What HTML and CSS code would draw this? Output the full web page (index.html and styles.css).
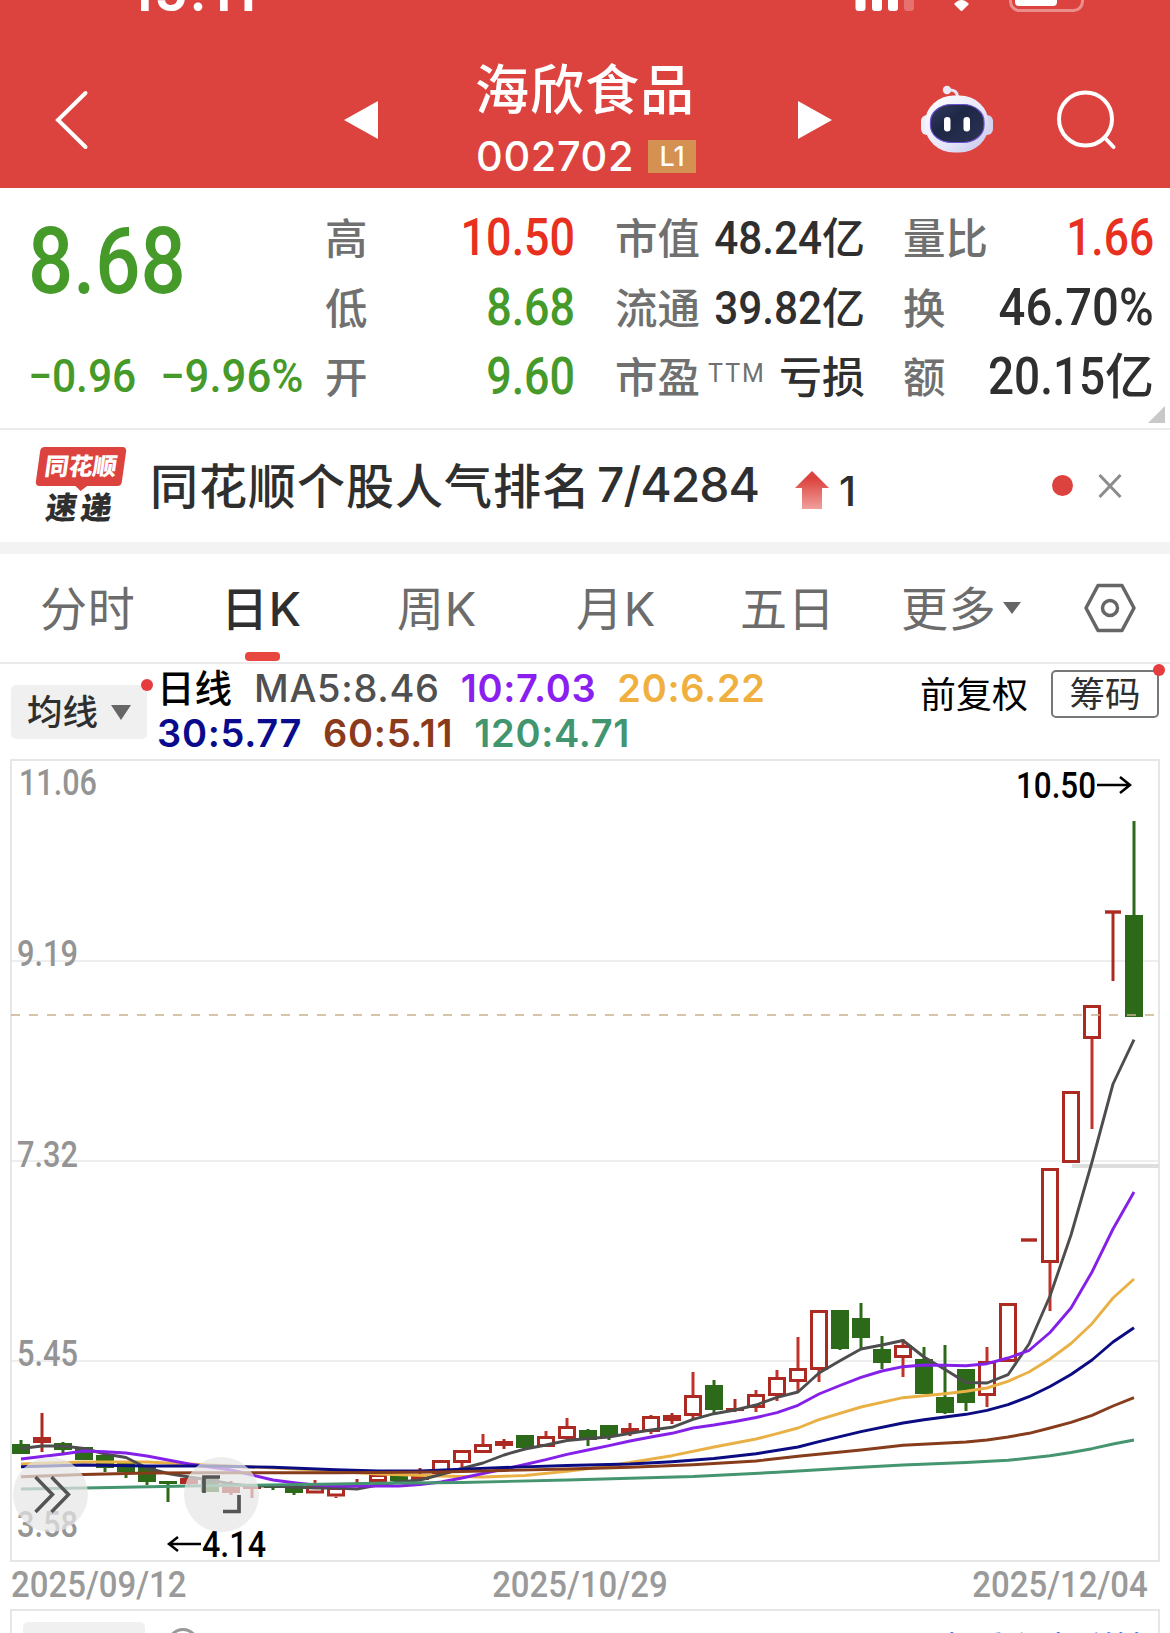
FILE: index.html
```
<!DOCTYPE html>
<html lang="zh-CN">
<head>
  <meta charset="UTF-8">
  <title>海欣食品 002702</title>
  <link rel="stylesheet" href="styles.css">
</head>
<body>
  <header class="header">
    <div class="status">
      <span class="clock">15:11</span>
      <svg class="status-icons" width="232" height="13" viewBox="853 0 232 13">
        <g fill="#fff">
          <rect x="855.5" y="-10" width="10" height="21" rx="3"/>
          <rect x="872" y="-10" width="10" height="21" rx="3"/>
          <rect x="888" y="-10" width="10" height="21" rx="3"/>
          <rect x="904" y="-10" width="10" height="21" rx="3" opacity=".25"/>
          <path d="M954 4 Q961.500 -4 969 4 L963 10 Q961.500 12 960 10 Z"/>
          <rect x="1015" y="-12" width="42" height="18" rx="4"/>
        </g>
        <rect x="1010.500" y="-22" width="72" height="32.500" rx="9" fill="none" stroke="#fff" stroke-width="3" opacity=".4"/>
      </svg>
    </div>
    <div class="navbar">
      <svg class="back" width="36" height="62" viewBox="0 0 36 62"><path d="M31.500 4 L4 31 L31.500 58" fill="none" stroke="#fff" stroke-width="4" stroke-linecap="round"/></svg>
      <svg class="prev" width="34" height="38" viewBox="0 0 34 38"><path d="M0 19 L34 0 V38 Z" fill="#fff"/></svg>
      <div class="title">
        <div class="name">海欣食品</div>
        <div class="code">002702<span class="level">L1</span></div>
      </div>
      <svg class="next" width="34" height="38" viewBox="0 0 34 38"><path d="M34 19 L0 0 V38 Z" fill="#fff"/></svg>
      <svg class="robot" width="74" height="68" viewBox="920 85 74 68">
        <defs>
          <linearGradient id="head" x1="0" y1="0" x2="1" y2="1">
            <stop offset="0" stop-color="#fff"/><stop offset=".6" stop-color="#e6e6f8"/><stop offset="1" stop-color="#c3c2ea"/>
          </linearGradient>
          <linearGradient id="face" x1="0" y1="0" x2="1" y2="1">
            <stop offset="0" stop-color="#323c60"/><stop offset=".4" stop-color="#1f2746"/><stop offset="1" stop-color="#2c3352"/>
          </linearGradient>
        </defs>
        <path d="M948 90 Q957 89 957.500 97" fill="none" stroke="#e4e4f6" stroke-width="3"/>
        <circle cx="947" cy="90" r="4.200" fill="#e9e9f8"/>
        <rect x="921" y="115" width="12" height="20" rx="6" fill="#eeeefa"/>
        <rect x="981" y="115" width="12" height="20" rx="6" fill="#d4d4f2"/>
        <rect x="925" y="95.500" width="63.500" height="57" rx="29" ry="27" fill="url(#head)"/>
        <rect x="930.500" y="104.500" width="53.500" height="38" rx="21" ry="17" fill="url(#face)" stroke="#6a4fd0" stroke-width="1.200"/>
        <rect x="944" y="117" width="6.500" height="14.500" rx="3.200" fill="#fff"/>
        <rect x="963.500" y="117" width="6.500" height="14.500" rx="3.200" fill="#fff"/>
      </svg>
      <svg class="search" width="62" height="62" viewBox="0 0 62 62"><g fill="none" stroke="#fff" stroke-width="4"><circle cx="28.500" cy="30" r="26.500"/><path d="M48 49 L56.500 58" stroke-linecap="round"/></g></svg>
    </div>
  </header>

  <section class="quote">
    <div class="price">
      <div class="last"><span class="num">8.68</span></div>
      <div class="change"><span class="num">−0.96</span><span class="num">−9.96%</span></div>
    </div>
    <dl class="col col-a">
      <div><dt>高</dt><dd class="up"><span class="num">10.50</span></dd></div>
      <div><dt>低</dt><dd class="down"><span class="num">8.68</span></dd></div>
      <div><dt>开</dt><dd class="down"><span class="num">9.60</span></dd></div>
    </dl>
    <dl class="col col-b">
      <div><dt>市值</dt><dd><span class="num">48.24</span>亿</dd></div>
      <div><dt>流通</dt><dd><span class="num">39.82</span>亿</dd></div>
      <div><dt>市盈<sup>TTM</sup></dt><dd>亏损</dd></div>
    </dl>
    <dl class="col col-c">
      <div><dt>量比</dt><dd class="up"><span class="num">1.66</span></dd></div>
      <div><dt>换</dt><dd><span class="num">46.70%</span></dd></div>
      <div><dt>额</dt><dd><span class="num">20.15</span>亿</dd></div>
    </dl>
    <i class="corner"></i>
  </section>

  <section class="news">
    <div class="news-logo">
      <span class="logo-top">同花顺</span>
      <span class="logo-bottom">速递</span>
    </div>
    <div class="news-text">同花顺个股人气排名</div>
    <div class="rank">7/4284</div>
    <svg class="rise" width="34" height="38" viewBox="0 0 34 38">
      <defs><linearGradient id="rise" x1="0" y1="0" x2="0" y2="1"><stop offset=".2" stop-color="#dc433e"/><stop offset="1" stop-color="#f0a09c"/></linearGradient></defs>
      <path d="M17 0 L34 17 H27 V38 H7 V17 H0 Z" fill="url(#rise)"/>
    </svg>
    <div class="rise-num">1</div>
    <i class="dot"></i>
    <svg class="close" width="24" height="24" viewBox="0 0 24 24"><path d="M1.500 1 L22.500 23 M22.500 1 L1.500 23" stroke="#8c8c8c" stroke-width="3"/></svg>
  </section>

  <nav class="tabs">
    <span class="tab">分时</span>
    <span class="tab active">日K</span>
    <span class="tab">周K</span>
    <span class="tab">月K</span>
    <span class="tab">五日</span>
    <span class="tab">更多<i class="caret"></i></span>
    <svg class="setting" width="52" height="50" viewBox="0 0 52 50"><g fill="none" stroke="#666" stroke-width="3.500"><path d="M14 2.500 H38 L50 25 L38 47.500 H14 L2 25 Z" stroke-linejoin="round"/><circle cx="26" cy="25" r="7.500"/></g></svg>
  </nav>

  <section class="indicators">
    <div class="ma-select">均线<i></i></div>
    <div class="ma-list">
      <div><b>日线</b><span class="ma5">MA5:8.46</span><span class="ma10">10:7.03</span><span class="ma20">20:6.22</span></div>
      <div><span class="ma30">30:5.77</span><span class="ma60">60:5.11</span><span class="ma120">120:4.71</span></div>
    </div>
    <div class="adjust">前复权</div>
    <div class="chips">筹码</div>
  </section>

  <svg id="chart" width="1170" height="806" viewBox="0 757 1170 806"></svg>

  <div class="dates"><span>2025/09/12</span><span>2025/10/29</span><span>2025/12/04</span></div>

  <section class="sub-panel">
    <div class="sub-select"></div>
    <i class="sub-info"></i>
    <div class="sub-link">点看主力详情</div>
  </section>

  <script src="chart.js"></script>
</body>
</html>
```
FILE: styles.css
```
* {
  box-sizing: border-box;
}
body {
  margin: 0;
  width: 1170px;
  height: 1633px;
  overflow: hidden;
  background: #fff;
  color: #2f2f2f;
  font-family: Inter, "Noto Sans CJK SC", sans-serif;
}
svg {
  display: block;
  flex: none;
}
.num {
  display: inline-block;
  font-family: Roboto, sans-serif;
  font-weight: 500;
  transform: scaleX(.88);
  transform-origin: right;
}

/* header */
.header {
  height: 188px;
  background: #dc433e;
  color: #fff;
}
.status {
  height: 13px;
  display: flex;
  padding: 0 85px 0 130px;
  justify-content: space-between;
  overflow: hidden;
}
.clock {
  font-size: 51px;
  font-weight: 700;
  line-height: 60px;
  margin-top: -37px;
  letter-spacing: 2.5px;
}
.navbar {
  display: flex;
  align-items: flex-start;
  height: 175px;
}
.back {
  margin: 76px 0 0 54px;
}
.prev {
  margin: 88px 0 0 254px;
}
.title {
  width: 230px;
  margin: 40px 0 0 97px;
}
.name {
  font-size: 54px;
  font-weight: 500;
  line-height: 76px;
  letter-spacing: 1px;
  white-space: nowrap;
}
.code {
  display: flex;
  align-items: center;
  height: 54px;
  padding-left: 1px;
  font-size: 41.5px;
  font-weight: 500;
  letter-spacing: .6px;
}
.level {
  width: 48px;
  height: 33px;
  margin-left: 14px;
  background: #d49152;
  font-size: 27px;
  line-height: 33px;
  text-align: center;
  letter-spacing: 0;
}
.next {
  margin: 88px 0 0 93px;
}
.robot {
  margin: 72px 0 0 88px;
}
.search {
  margin: 76px 0 0 63px;
}

/* quote */
.quote {
  position: relative;
  display: flex;
  height: 242px;
  border-bottom: 2px solid #ebebeb;
}
.price {
  width: 325px;
  padding-left: 28px;
  color: #459a2a;
}
.price .num {
  transform-origin: left;
}
.last {
  height: 150px;
  padding-top: 18px;
  font-size: 92px;
  line-height: 108px;
}
.last .num {
  transform: scaleX(.865);
}
.change {
  display: flex;
  font-size: 46px;
  line-height: 60px;
  margin-top: 8px;
}
.change .num {
  flex: none;
  transform: scaleX(.95);
}
.change .num:first-child {
  width: 132px;
  transform: scaleX(.925);
}
.col {
  margin: 15px 0 0;
  white-space: nowrap;
}
.col div {
  display: flex;
  justify-content: space-between;
  height: 69.5px;
  line-height: 70px;
}
.col dt {
  padding-top: 1px;
  font-size: 42.5px;
  font-weight: 500;
  color: #707070;
}
.col dd {
  margin: 0;
  text-align: right;
  font-size: 51px;
  font-weight: 500;
}
.col .num {
  margin-left: -40px;
}
.col-a {
  width: 250px;
}
.col-a dd {
  margin-top: -1px;
}
.col-b {
  width: 250px;
  margin-left: 40px;
}
.col-b dd {
  font-size: 43px;
}
.col-b .num {
  font-size: 45.5px;
  transform: scaleX(.93);
}
.col-c {
  width: 251px;
  margin-left: 38px;
}
.col-c dd {
  font-size: 49px;
}
.col-c .num {
  font-size: 51px;
  transform: scaleX(.9);
}
.col-c div:nth-child(2) .num {
  transform: scaleX(.925);
}
.col-c .up .num {
  transform: scaleX(.87);
}
.col sup {
  position: relative;
  top: 4px;
  font-family: Roboto, sans-serif;
  font-size: 25px;
  font-weight: 400;
  line-height: 1;
  margin-left: 8px;
  letter-spacing: 2px;
}
.up {
  color: #e8301f;
}
.down {
  color: #459a2a;
}
.corner {
  position: absolute;
  right: 5px;
  bottom: 5px;
  border-left: 17px solid transparent;
  border-bottom: 17px solid #c8c8c8;
}

/* news */
.news {
  display: flex;
  align-items: center;
  height: 124px;
  border-bottom: 12px solid #f3f3f3;
  white-space: nowrap;
}
.news-logo {
  width: 86px;
  height: 78px;
  margin-left: 38px;
  text-align: center;
  font-weight: 900;
}
.logo-top {
  position: relative;
  display: block;
  height: 39px;
  background: #dc433e;
  border-radius: 4px;
  color: #fff;
  font-size: 24px;
  line-height: 39px;
  transform: skewX(-8deg);
}
.logo-top::after {
  content: '';
  position: absolute;
  left: 39px;
  top: 38px;
  border: 7px solid transparent;
  border-top: 6px solid #dc433e;
}
.logo-bottom {
  display: block;
  font-size: 31px;
  line-height: 44px;
  letter-spacing: 4px;
  transform: skewX(-8deg);
}
.news-text {
  margin: -7px 0 0 26px;
  font-size: 48px;
  font-weight: 500;
  letter-spacing: 1px;
}
.rank {
  margin: -3px 0 0 6px;
  font-size: 48px;
  font-weight: 500;
  letter-spacing: -1px;
}
.rise {
  margin: 7px 0 0 36px;
}
.rise-num {
  width: 30px;
  margin: 9px 0 0 10px;
  font-size: 41px;
  font-weight: 500;
}
.dot {
  width: 21px;
  height: 21px;
  margin: 0 25px 1px auto;
  border-radius: 50%;
  background: #dc433e;
}
.close {
  margin: 0 48px 1px 0;
}

/* tabs */
.tabs {
  display: grid;
  grid-template-columns: 181px 176px 179px 164px 161px 183px 52px;
  align-items: center;
  height: 110px;
  border-bottom: 2px solid #ebebeb;
  padding-left: 40px;
  font-size: 47px;
  font-weight: 400;
  color: #6c6c6c;
  white-space: nowrap;
}
.tab {
  position: relative;
  display: flex;
  align-items: center;
  height: 108px;
  padding-bottom: 6px;
  letter-spacing: .7px;
}
.active {
  color: #2f2f2f;
  font-weight: 500;
}
.active::after {
  content: '';
  position: absolute;
  left: 24px;
  bottom: 1px;
  width: 35px;
  height: 9px;
  border-radius: 4px;
  background: #e8473f;
}
.caret {
  margin: 6px 0 0 7px;
  border: 9.5px solid transparent;
  border-top: 12px solid #666;
  border-bottom: 0;
}

/* indicators */
.indicators {
  display: flex;
  height: 93px;
  white-space: nowrap;
}
.ma-select {
  position: relative;
  width: 136px;
  height: 54px;
  margin: 21px 0 0 11px;
  padding-left: 16px;
  border-radius: 5px;
  background: #f0f0f0;
  font-size: 35.5px;
  font-weight: 500;
  line-height: 56px;
}
.ma-select i {
  display: inline-block;
  margin: 0 0 5px 13px;
  border: 10.5px solid transparent;
  border-top: 15px solid #666;
  border-bottom: 0;
}
.ma-select::after,
.chips::after {
  content: '';
  position: absolute;
  right: -6px;
  top: -6px;
  width: 12px;
  height: 12px;
  border-radius: 50%;
  background: #e63b3f;
}
.ma-list {
  width: 773px;
  padding: 2px 0 0 10px;
  font-size: 38px;
  font-weight: 600;
  line-height: 45px;
  letter-spacing: .7px;
}
.ma-list > div {
  height: 45px;
  display: flex;
  gap: 21px;
}
.ma-list b {
  margin-right: 1px;
  font-size: 37.5px;
  font-weight: 500;
  color: #000;
  letter-spacing: 0;
}
.ma5 { color: #505050; font-weight: 500; }
.ma10 { color: #8a1ff0; }
.ma20 { color: #efb03f; }
.ma30 { color: #0a0a8c; }
.ma60 { color: #8b3a1a; }
.ma120 { color: #41956f; }
.adjust {
  width: 131px;
  color: #000;
  font-size: 36px;
  line-height: 62px;
}
.chips {
  position: relative;
  width: 108px;
  height: 48px;
  margin-top: 6px;
  border: 2px solid #777;
  border-radius: 5px;
  font-size: 35.5px;
  line-height: 45px;
  text-align: center;
}
.chips::after {
  right: -8px;
  top: -8px;
}

/* chart */
.axis {
  font: 500 36px Roboto, sans-serif;
  fill: #949494;
}
.mark {
  font: 500 36px Roboto, sans-serif;
  fill: #000;
}
.dates {
  display: flex;
  justify-content: space-between;
  height: 46px;
  padding: 0 22px 0 11px;
  color: #9a9a9a;
  font: 500 36px/44px Roboto, sans-serif;
}
.dates span {
  transform: scaleX(.915);
}
.dates span:first-child {
  transform-origin: left;
}
.dates span:last-child {
  transform-origin: right;
}

/* lower panel */
.sub-panel {
  display: flex;
  height: 60px;
  margin: 0 10px 0 10px;
  border: 2px solid #e6e6e6;
}
.sub-select {
  width: 122px;
  margin: 11px 0 0 11px;
  border-radius: 5px;
  background: #f0f0f0;
}
.sub-info {
  width: 32px;
  height: 32px;
  margin: 17px 0 0 22px;
  border: 3px solid #999;
  border-radius: 50%;
}
.sub-link {
  margin: 10px 8px 0 auto;
  color: #3b82f0;
  font-size: 36px;
}
```
FILE: chart.js
```
const chart = document.getElementById('chart');
const step = 21;
const x0 = 21;

// r = hollow, f = filled red, g = green, d = flat: [type, high, top, bottom, low]
const candles = [
  ['g', 1440, 1444, 1454, 1454], ['f', 1413, 1437, 1443, 1452], ['g', 1442, 1443, 1450, 1453],
  ['g', 1447, 1447, 1460, 1460], ['g', 1455, 1455, 1468, 1472], ['g', 1463, 1463, 1472, 1478],
  ['g', 1467, 1467, 1482, 1485], ['g', 1481, 1481, 1484, 1502], ['f', 1478, 1478, 1484, 1486],
  ['g', 1478, 1478, 1492, 1492], ['f', 1481, 1487, 1493, 1495], ['f', 1486, 1486, 1489, 1498],
  ['g', 1484, 1484, 1488, 1490], ['g', 1485, 1485, 1493, 1495], ['r', 1480, 1486, 1493.5, 1493],
  ['r', 1487, 1487, 1496.5, 1498], ['f', 1479, 1483, 1486, 1486], ['r', 1474, 1474, 1482, 1482],
  ['g', 1475, 1475, 1481, 1481], ['f', 1468, 1476, 1480, 1480], ['r', 1460, 1460, 1474, 1474],
  ['r', 1450, 1450, 1463, 1468], ['r', 1434, 1444, 1453, 1453], ['f', 1439, 1441, 1446, 1449],
  ['g', 1435, 1435, 1448, 1448], ['r', 1431, 1436, 1447, 1447], ['r', 1418, 1426, 1439, 1439],
  ['g', 1429, 1430, 1440, 1446], ['g', 1425, 1425, 1437, 1440], ['f', 1423, 1428, 1433, 1436],
  ['r', 1415, 1416, 1432, 1434], ['f', 1413, 1415, 1421, 1424], ['r', 1372, 1395, 1416, 1419],
  ['g', 1380, 1385, 1410, 1413], ['f', 1399, 1408, 1411, 1412], ['r', 1390, 1394, 1408, 1412],
  ['r', 1370, 1377, 1396, 1401], ['r', 1337, 1368, 1382, 1391], ['r', 1310, 1310, 1370, 1382],
  ['g', 1310, 1310, 1349, 1350], ['g', 1303, 1318, 1338, 1348], ['g', 1336, 1349, 1363, 1369],
  ['r', 1339, 1345, 1358, 1377], ['g', 1347, 1359, 1394, 1394], ['g', 1345, 1397, 1413, 1414],
  ['g', 1369, 1369, 1403, 1411], ['r', 1347, 1361, 1396, 1407], ['r', 1303, 1303, 1362, 1362],
  ['d', 1240, 1238.3, 1241.7, 1240], ['r', 1168, 1168, 1263, 1311], ['r', 1091, 1091, 1163, 1163],
  ['r', 1005, 1005, 1039, 1129], ['d', 912, 910.3, 913.7, 981], ['g', 821, 915, 1017, 1017]
];

// x,y points of the moving averages
const lines = {
  '#e9b145': '21,1464 84,1462 147,1462 189,1464 231,1466 315,1470 378,1474 441,1476 483,1477 525,1475.5 567,1471.3 609,1466 630,1462.5 672,1455.7 714,1447 756,1439 777,1433.7 798,1428 819,1419.7 861,1407 903,1397.7 945,1393.7 966,1391.3 987,1388 1008,1381.3 1029,1372 1050,1359 1071,1343.5 1092,1323.7 1113,1298 1134,1279',
  '#4d4d4d': '21,1448.5 42,1446 63,1446 84,1448.5 105,1454 126,1457.5 147,1468 168,1473.5 189,1477 210,1480 231,1484 252,1486 273,1486 294,1487 315,1488 336,1488 357,1489 378,1485 399,1482 420,1480 441,1474.5 462,1468.5 483,1463 504,1455 525,1449 546,1445 567,1440.5 588,1438.5 609,1437 630,1433.3 651,1430 672,1427.3 693,1419.3 714,1413.7 735,1410 756,1405 777,1397.3 798,1392 819,1373 840,1360.7 861,1349 882,1345 903,1340.5 924,1357 945,1369.5 966,1382.5 987,1383 1008,1374.7 1029,1344 1050,1296 1071,1235 1092,1162 1113,1084 1134,1039.7',
  '#8420e8': '21,1459 42,1456.5 63,1454 84,1451 105,1451.7 126,1453 147,1456 168,1460 189,1464 210,1467 231,1470 252,1475 273,1480 294,1482.7 315,1485 336,1486 378,1486 399,1486 420,1484.5 441,1482 462,1478 483,1473.5 504,1469 525,1464.5 546,1459.7 567,1454.3 588,1450 609,1445.7 630,1441 651,1437 672,1433.3 693,1428 714,1425 735,1421.5 756,1417.5 777,1412.7 798,1405.3 819,1394 840,1385.5 861,1377.3 882,1371 903,1366.7 924,1365 945,1365.2 966,1365.7 987,1363.7 1008,1358 1029,1350.5 1050,1332.5 1071,1308 1092,1272 1113,1229 1134,1192',
  '#0b0b82': '21,1466.7 84,1465 147,1466 210,1466 273,1467.3 336,1469.7 378,1471 420,1471 462,1469.3 504,1467.5 567,1465.5 630,1464 672,1461.7 714,1458.5 756,1453.7 798,1447 819,1441.7 861,1431.7 903,1423 924,1419.7 966,1414.3 987,1410.3 1008,1404.7 1029,1396.7 1050,1386.5 1071,1374.5 1092,1360 1113,1342 1134,1327.7',
  '#873c1c': '21,1476.7 84,1474.5 147,1473 210,1472.7 336,1472.7 441,1472 504,1470.5 567,1469 630,1467.3 693,1464.7 756,1461 798,1456.3 861,1450 903,1445.3 966,1442 987,1440 1008,1437 1029,1433.3 1050,1428 1071,1422.3 1092,1415.3 1113,1406 1134,1397.7',
  '#459570': '21,1489 84,1488 189,1486 336,1484 378,1483.2 462,1482.5 567,1480 693,1476.5 777,1472.3 861,1467.3 903,1465 966,1462.5 1008,1460.3 1050,1455.7 1071,1452.5 1092,1448.7 1113,1444 1134,1440'
};

let out = '';

// grid
[961, 1161, 1361].forEach(y => {
  out += `<line x1="11" x2="1159" y1="${y}" y2="${y}" stroke="#e8e8e8" stroke-width="1.5"/>`;
});
out += '<rect x="11" y="760" width="1148" height="801" fill="none" stroke="#e6e6e6" stroke-width="2"/>';
out += '<rect x="1072" y="1164" width="87" height="4" fill="#dedede"/>';

// price scale
[['11.06', 19, 795, 78], ['9.19', 17, 966, 61], ['7.32', 17, 1167, 61], ['5.45', 17, 1366, 61], ['3.58', 17, 1537, 61]].forEach(t => {
  out += `<text class="axis" x="${t[1]}" y="${t[2]}" textLength="${t[3]}" lengthAdjust="spacingAndGlyphs">${t[0]}</text>`;
});

candles.forEach((c, i) => {
  const [type, high, top, bottom, low] = c;
  const x = x0 + i * step;
  const color = type === 'g' ? '#2c6919' : '#ad2a22';
  if (type === 'r') {
    if (high < top) out += `<line x1="${x}" x2="${x}" y1="${high}" y2="${top}" stroke="#c0322b" stroke-width="3"/>`;
    if (low > bottom) out += `<line x1="${x}" x2="${x}" y1="${bottom}" y2="${low}" stroke="#c0322b" stroke-width="3"/>`;
    out += `<rect x="${x - 7.5}" y="${top + 1.5}" width="15" height="${bottom - top - 3}" fill="#fff" stroke="${color}" stroke-width="3"/>`;
  } else {
    const w = type === 'd' ? 16 : 18;
    out += `<line x1="${x}" x2="${x}" y1="${high}" y2="${low}" stroke="${color}" stroke-width="3"/>`;
    out += `<rect x="${x - w / 2}" y="${top}" width="${w}" height="${bottom - top}" fill="${color}"/>`;
  }
});

Object.keys(lines).forEach(color => {
  out += `<polyline points="${lines[color]}" fill="none" stroke="${color}" stroke-width="2.9" stroke-linejoin="round"/>`;
});

out += '<line x1="11" x2="1154" y1="1015" y2="1015" stroke="#c9b08c" stroke-width="1.7" stroke-dasharray="9 9"/>';

// high / low marks
out += '<text class="mark" x="1016" y="798" textLength="80" lengthAdjust="spacingAndGlyphs">10.50</text>';
out += '<path d="M1097 785 H1130 M1120 777 L1130 785 L1120 793" fill="none" stroke="#000" stroke-width="2.5"/>';
out += '<text class="mark" x="202" y="1557" textLength="64" lengthAdjust="spacingAndGlyphs">4.14</text>';
out += '<path d="M201 1544 H169 M178 1537 L169 1544 L178 1551" fill="none" stroke="#000" stroke-width="2.5"/>';

// round buttons
out += '<circle cx="50.5" cy="1494.500" r="37.500" fill="#e6e6e6" opacity=".72"/><circle cx="221.500" cy="1494.500" r="37.500" fill="#e6e6e6" opacity=".72"/>';
out += '<path d="M35.500 1477 L52.500 1494.500 L35.500 1512 M51.500 1477 L68.500 1494.500 L51.500 1512" fill="none" stroke="#555" stroke-width="3.500"/>';
out += '<path d="M204 1493 V1477 H220 M223 1511.500 H239 V1495" fill="none" stroke="#555" stroke-width="3.700"/>';

chart.innerHTML = out;
```
